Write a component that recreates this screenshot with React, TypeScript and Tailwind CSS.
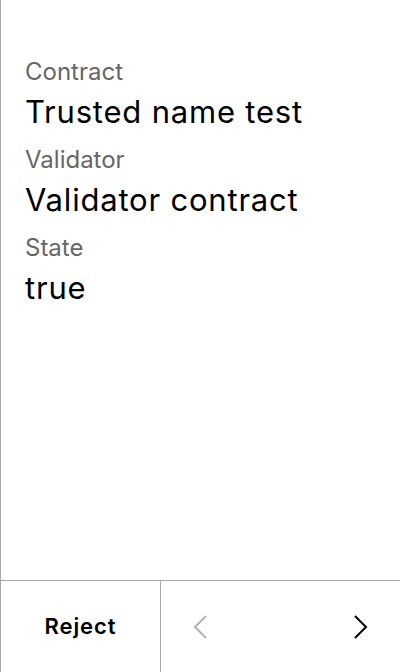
const fields = [
  { label: "Contract", value: "Trusted name test" },
  { label: "Validator", value: "Validator contract" },
  { label: "State", value: "true" },
];

const Chevron = ({ dir, className }: { dir: "left" | "right"; className?: string }) => (
  <svg width="14" height="24" viewBox="0 0 14 24" fill="none" className={className}>
    <path
      d={dir === "left" ? "M13 1 L2 12 L13 23" : "M1 1 L12 12 L1 23"}
      stroke="currentColor"
      strokeWidth="2"
    />
  </svg>
);

export default function App() {
  return (
    <div className="flex h-[672px] w-[400px] flex-col border-l border-[#a8a8a8] bg-white font-['Inter','Noto_Sans',sans-serif] text-black">
      <div className="flex flex-1 flex-col px-6 pt-[58px]">
        {fields.map((f) => (
          <div key={f.label} className="flex flex-col">
            <div className="text-[24px] leading-[28px] text-[#666666]">{f.label}</div>
            <div className="mt-[6px] mb-[14px] text-[31px] leading-[40px] tracking-[0.8px]">{f.value}</div>
          </div>
        ))}
      </div>
      <div className="flex h-[92px] border-t border-[#a8a8a8]">
        <button className="flex w-[160px] items-center justify-center border-r border-[#a8a8a8] text-[22px] font-semibold tracking-[0.9px]">
          Reject
        </button>
        <div className="flex flex-1 items-center justify-between px-[32px]">
          <Chevron dir="left" className="text-[#b3b3b3]" />
          <Chevron dir="right" className="text-black" />
        </div>
      </div>
    </div>
  );
}
